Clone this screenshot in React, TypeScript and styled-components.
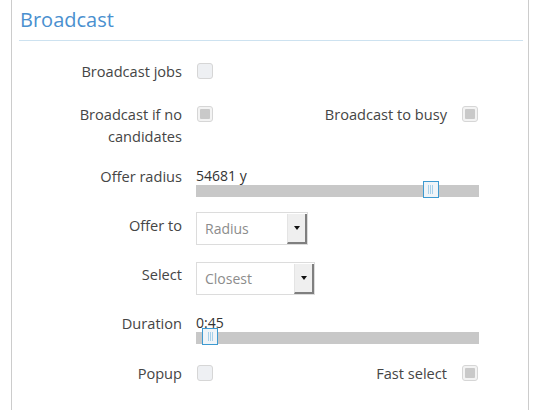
import React from "react";
import styled, { createGlobalStyle } from "styled-components";

const GlobalStyle = createGlobalStyle`
  html, body {
    margin: 0;
    padding: 0;
    background: #ffffff;
  }
  body {
    font-family: "Open Sans", "Liberation Sans", sans-serif;
    color: #454545;
  }
`;

const Panel = styled.div`
  box-sizing: border-box;
  height: 410px;
  margin: 0 10px 0 11px;
  padding: 0 5px 0 7px;
  border-left: 1px solid #cccccc;
  border-right: 1px solid #cccccc;
`;

const Title = styled.h2`
  margin: 0;
  padding: 6px 0 6px 1px;
  font-size: 20px;
  font-weight: 400;
  line-height: 28px;
  color: #4a90cf;
  border-bottom: 1px solid #cde2f0;
`;

const Form = styled.div`
  display: flex;
  flex-direction: column;
  padding-top: 19px;
`;

const Row = styled.div<{ $h: number }>`
  display: grid;
  grid-template-columns: 163px 283px;
  column-gap: 14px;
  align-items: start;
  height: ${(p) => p.$h}px;
`;

const Label = styled.div`
  font-size: 14.6px;
  line-height: 22px;
  text-align: right;
`;

const CheckLine = styled.div`
  display: flex;
  justify-content: space-between;
  align-items: flex-start;
  padding: 0 1px;
`;

const Pair = styled.div`
  display: flex;
  align-items: flex-start;
  gap: 15px;
`;

const Box = styled.span<{ $disabled?: boolean }>`
  position: relative;
  display: block;
  box-sizing: border-box;
  width: 16px;
  height: 16px;
  margin-top: 3px;
  border: 1px solid #d6d6d6;
  border-radius: 3px;
  background: ${(p) => (p.$disabled ? "#f3f3f3" : "#eef0f3")};

  &::after {
    content: "";
    display: ${(p) => (p.$disabled ? "block" : "none")};
    position: absolute;
    left: 2px;
    top: 2px;
    width: 10px;
    height: 10px;
    background: #c9c9c9;
    border-radius: 1px;
  }
`;

const SliderWrap = styled.div`
  display: flex;
  flex-direction: column;
`;

const Value = styled.div`
  margin-top: 2px;
  font-size: 14px;
  line-height: 18px;
  color: #333333;
`;

const Track = styled.div`
  position: relative;
  height: 12px;
  background: #c8c8c8;
`;

const Handle = styled.div`
  position: absolute;
  top: -4px;
  box-sizing: border-box;
  width: 16px;
  height: 17px;
  border: 1px solid #3d9ad1;
  background: #eff4f8;
  display: flex;
  justify-content: center;
  align-items: center;
  gap: 1px;
`;

const Grip = styled.span`
  display: block;
  width: 1px;
  height: 9px;
  background: #a6d0ea;
`;

const Select = styled.div<{ $w: number; $dy: number }>`
  box-sizing: border-box;
  display: flex;
  width: ${(p) => p.$w}px;
  height: 33px;
  margin-top: ${(p) => p.$dy}px;
  border: 1px solid #dcdcdc;
  background: #ffffff;
`;

const SelectText = styled.span`
  flex: 1;
  padding-left: 8px;
  font-size: 14px;
  line-height: 31px;
  color: #8c8c8c;
`;

const ArrowButton = styled.span`
  box-sizing: border-box;
  width: 20px;
  margin: 1px 0 0 0;
  display: flex;
  align-items: center;
  justify-content: center;
  background: #efefef;
  border-left: 1px solid #e4e4e4;
  border-right: 2px solid #7f7f7f;
  border-bottom: 2px solid #7f7f7f;

  &::before {
    content: "";
    width: 0;
    height: 0;
    border-left: 3px solid transparent;
    border-right: 3px solid transparent;
    border-top: 4px solid #111111;
  }
`;

const Check = ({ disabled }: { disabled?: boolean }) => <Box $disabled={disabled} />;

const Slider = ({ value, pos }: { value: string; pos: number }) => (
  <SliderWrap>
    <Value>{value}</Value>
    <Track>
      <Handle style={{ left: `${pos * 267}px` }}>
        <Grip />
        <Grip />
        <Grip />
      </Handle>
    </Track>
  </SliderWrap>
);

const Dropdown = ({ text, w, dy }: { text: string; w: number; dy: number }) => (
  <Select $w={w} $dy={dy}>
    <SelectText>{text}</SelectText>
    <ArrowButton />
  </Select>
);

export default function App() {
  return (
    <>
      <GlobalStyle />
      <Panel>
        <Title>Broadcast</Title>
        <Form>
          <Row $h={43}>
            <Label>Broadcast jobs</Label>
            <CheckLine>
              <Check />
            </CheckLine>
          </Row>
          <Row $h={62}>
            <Label>Broadcast if no candidates</Label>
            <CheckLine>
              <Check disabled />
              <Pair>
                <Label>Broadcast to busy</Label>
                <Check disabled />
              </Pair>
            </CheckLine>
          </Row>
          <Row $h={49}>
            <Label>Offer radius</Label>
            <Slider value="54681 y" pos={0.85} />
          </Row>
          <Row $h={49}>
            <Label>Offer to</Label>
            <Dropdown text="Radius" w={112} dy={-2} />
          </Row>
          <Row $h={49}>
            <Label>Select</Label>
            <Dropdown text="Closest" w={119} dy={-1} />
          </Row>
          <Row $h={50}>
            <Label>Duration</Label>
            <Slider value="0:45" pos={0.023} />
          </Row>
          <Row $h={22}>
            <Label>Popup</Label>
            <CheckLine>
              <Check />
              <Pair>
                <Label>Fast select</Label>
                <Check disabled />
              </Pair>
            </CheckLine>
          </Row>
        </Form>
      </Panel>
    </>
  );
}
